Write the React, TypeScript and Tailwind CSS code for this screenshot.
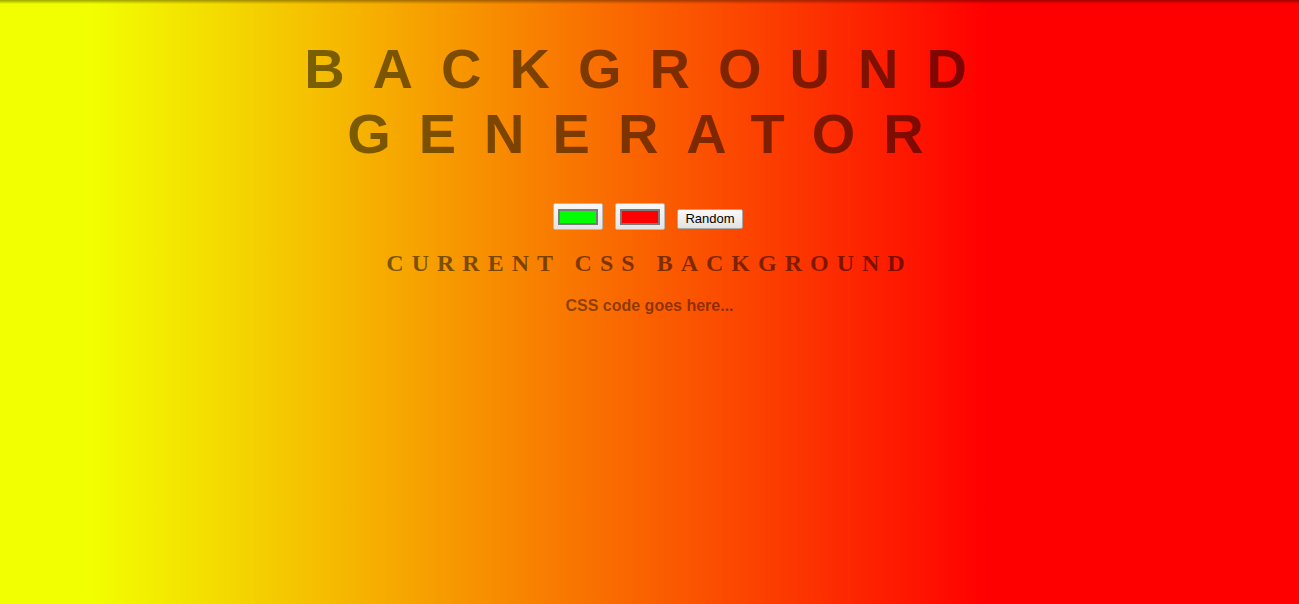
import React, { useState } from "react";

// Color picker look-alike: gray framed box with a swatch inside
const ColorSwatch: React.FC<{ color: string }> = ({ color }) => (
  <button
    type="button"
    className="flex h-[27px] w-[50px] items-center justify-center rounded-[2px] border border-[#b8b8b8] bg-gradient-to-b from-[#f8f8f8] to-[#e4e4e4]"
  >
    <span
      className="block h-[16px] w-[40px] border-2 border-[#7a7a7a]"
      style={{ backgroundColor: color }}
    />
  </button>
);

const App: React.FC = () => {
  const [color1] = useState("#00ff00");
  const [color2] = useState("#ff0000");

  return (
    <div className="relative min-h-[604px] w-full overflow-hidden bg-[linear-gradient(to_right,#f2ff00_7%,#ff0000_76%)] text-center">
      {/* thin shadow across the top edge */}
      <div className="pointer-events-none absolute inset-x-0 top-0 h-[4px] bg-gradient-to-b from-black/35 to-transparent" />

      <h1 className="pt-[36px] text-[56px] font-bold uppercase leading-[65px] tracking-[0.5em] text-black/50 [font-family:'Liberation_Sans',Arial,sans-serif]">
        Background Generator
      </h1>

      {/* Pickers + random button */}
      <div className="mt-[37px] flex items-end justify-center gap-3 pr-[3px]">
        <ColorSwatch color={color1} />
        <ColorSwatch color={color2} />
        <button
          type="button"
          className="mb-[1px] h-[20px] w-[66px] rounded-[2px] border border-[#a8a8a8] bg-gradient-to-b from-[#fafafa] to-[#e2e2e2] text-[13px] leading-[18px] text-black [font-family:'Liberation_Sans',Arial,sans-serif]"
        >
          Random
        </button>
      </div>

      <h3 className="mt-[19px] text-[24px] font-bold uppercase leading-[28px] tracking-[8px] text-black/50 [font-family:'Liberation_Serif','Times_New_Roman',serif]">
        Current CSS Background
      </h3>

      <p className="mt-[19px] text-[16px] font-bold leading-[20px] text-black/45 [font-family:'Liberation_Sans',Arial,sans-serif]">
        CSS code goes here...
      </p>
    </div>
  );
};

export default App;
